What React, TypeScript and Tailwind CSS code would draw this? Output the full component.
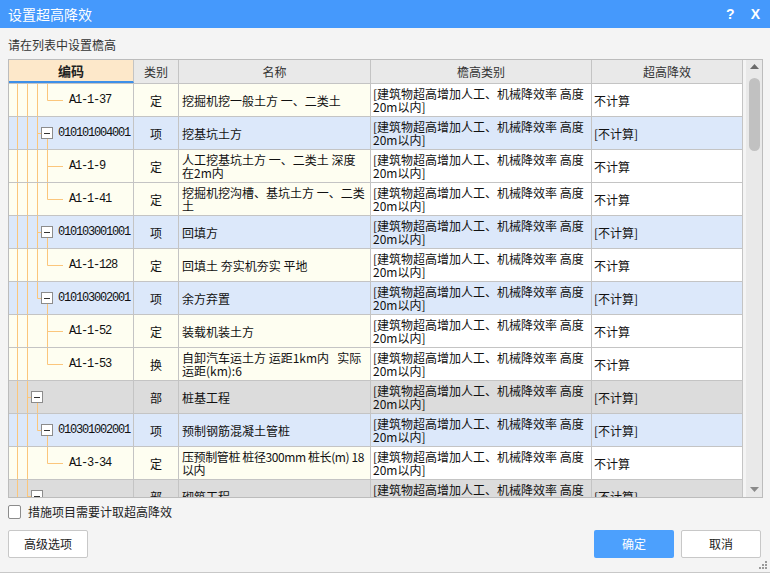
import React from 'react';

type Row = {
  kind: 'leaf' | 'xiang' | 'bu';
  code?: string;
  cat: string;
  name: string;
  eff: string;
  last?: boolean;
  l37?: boolean;
  tight?: boolean;
};

const EAVE = '[建筑物超高增加人工、机械降效率 高度\n20m以内]';

const ROWS: Row[] = [
  { kind: 'leaf', code: 'A1-1-37', cat: '定', name: '挖掘机挖一般土方 一、二类土', eff: '不计算', last: true, l37: true },
  { kind: 'xiang', code: '010101004001', cat: '项', name: '挖基坑土方', eff: '[不计算]' },
  { kind: 'leaf', code: 'A1-1-9', cat: '定', name: '人工挖基坑土方 一、二类土 深度\n在2m内', eff: '不计算', l37: true },
  { kind: 'leaf', code: 'A1-1-41', cat: '定', name: '挖掘机挖沟槽、基坑土方 一、二类\n土', eff: '不计算', last: true, l37: true },
  { kind: 'xiang', code: '010103001001', cat: '项', name: '回填方', eff: '[不计算]' },
  { kind: 'leaf', code: 'A1-1-128', cat: '定', name: '回填土 夯实机夯实 平地', eff: '不计算', last: true, l37: true },
  { kind: 'xiang', code: '010103002001', cat: '项', name: '余方弃置', eff: '[不计算]', last: true },
  { kind: 'leaf', code: 'A1-1-52', cat: '定', name: '装载机装土方', eff: '不计算' },
  { kind: 'leaf', code: 'A1-1-53', cat: '换', name: '自卸汽车运土方 运距1km内   实际\n运距(km):6', eff: '不计算', last: true },
  { kind: 'bu', cat: '部', name: '桩基工程', eff: '[不计算]' },
  { kind: 'xiang', code: '010301002001', cat: '项', name: '预制钢筋混凝土管桩', eff: '[不计算]', last: true },
  { kind: 'leaf', code: 'A1-3-34', cat: '定', name: '压预制管桩 桩径300mm 桩长(m) 18\n以内', eff: '不计算', last: true, tight: true },
  { kind: 'bu', cat: '部', name: '砌筑工程', eff: '[不计算]' },
];

const LINE = '#fbc67c';

function MinusBox({ x }: { x: number }) {
  return (
    <>
      <rect x={x + 0.5} y={10.5} width={11} height={11} fill="#fff" stroke="#8c8c8c" />
      <line x1={x + 3} y1={16.5} x2={x + 9} y2={16.5} stroke="#333" />
    </>
  );
}

// tree connectors for the 编码 column
function Tree({ row }: { row: Row }) {
  const w = row.kind === 'xiang' ? 49 : 60;
  return (
    <svg width={w} height={32} className="shrink-0">
      <line x1={8.5} y1={0} x2={8.5} y2={32} stroke={LINE} />
      <line x1={18.5} y1={0} x2={18.5} y2={32} stroke={LINE} />
      {row.kind === 'leaf' && (
        <>
          {row.l37 && <line x1={28.5} y1={0} x2={28.5} y2={32} stroke={LINE} />}
          <line x1={38.5} y1={0} x2={38.5} y2={row.last ? 16.5 : 32} stroke={LINE} />
          <line x1={38.5} y1={16.5} x2={54} y2={16.5} stroke={LINE} />
        </>
      )}
      {row.kind === 'xiang' && (
        <>
          <line x1={28.5} y1={0} x2={28.5} y2={row.last ? 16.5 : 32} stroke={LINE} />
          <line x1={28.5} y1={16.5} x2={32} y2={16.5} stroke={LINE} />
          <line x1={38.5} y1={22} x2={38.5} y2={32} stroke={LINE} />
          <MinusBox x={32} />
        </>
      )}
      {row.kind === 'bu' && (
        <>
          <line x1={18.5} y1={16.5} x2={22} y2={16.5} stroke={LINE} />
          <line x1={28.5} y1={22} x2={28.5} y2={32} stroke={LINE} />
          <MinusBox x={22} />
        </>
      )}
    </svg>
  );
}

function TableRow({ row }: { row: Row }) {
  const left =
    row.kind === 'leaf' ? 'bg-[#fefef1]' : row.kind === 'xiang' ? 'bg-[#dce8fa]' : 'bg-[#dcdcdc]';
  const right =
    row.kind === 'leaf' ? 'bg-white' : row.kind === 'xiang' ? 'bg-[#dce8fa]' : 'bg-[#dcdcdc]';
  return (
    <div className="flex h-[33px] shrink-0 border-b border-[#c4c4c4] text-[12px] leading-[13px] text-[#111]">
      <div className={`flex w-[125px] shrink-0 items-center border-r border-[#c4c4c4] ${left}`}>
        <Tree row={row} />
        {row.code && (
          <span className="font-['Liberation_Mono',monospace] text-[12px] tracking-[-1.2px]">{row.code}</span>
        )}
      </div>
      <div className={`flex w-[45px] shrink-0 items-center justify-center border-r border-[#c4c4c4] ${left}`}>
        {row.cat}
      </div>
      <div
        className={`flex w-[192px] shrink-0 items-center overflow-hidden whitespace-pre border-r border-[#c4c4c4] pl-[3px] ${left} ${
          row.tight ? 'tracking-[-0.4px]' : ''
        }`}
      >
        {row.name}
      </div>
      <div className={`flex w-[221px] shrink-0 items-center overflow-hidden whitespace-pre border-r border-[#c4c4c4] pl-[2px] ${right}`}>
        {EAVE}
      </div>
      <div className={`flex w-[151px] shrink-0 items-center border-r border-[#c4c4c4] pl-[2px] ${right}`}>
        {row.eff}
      </div>
    </div>
  );
}

function Header() {
  return (
    <div className="flex h-[24px] shrink-0 border-b border-[#c4c4c4] bg-[#e9e9e9] text-[12px] text-[#333]">
      <div className="flex w-[125px] shrink-0 items-center justify-center border-r border-[#c4c4c4] border-b-2 border-b-[#3d8fe8] bg-[#fde8ca] text-[13px] font-bold text-[#222]">
        编码
      </div>
      <div className="flex w-[45px] shrink-0 items-center justify-center border-r border-[#c4c4c4]">类别</div>
      <div className="flex w-[192px] shrink-0 items-center justify-center border-r border-[#c4c4c4]">名称</div>
      <div className="flex w-[221px] shrink-0 items-center justify-center border-r border-[#c4c4c4]">檐高类别</div>
      <div className="flex w-[151px] shrink-0 items-center justify-center border-r border-[#c4c4c4]">超高降效</div>
    </div>
  );
}

function ScrollBar() {
  return (
    <div className="flex w-[19px] shrink-0 bg-[#f4f4f4] pl-[3px]">
      <div className="flex w-[16px] flex-col items-center justify-between bg-[#e9e9e9] pb-[5px] pt-[4px]">
        <div className="flex flex-col items-center">
          <svg width={9} height={5}>
            <polygon points="0,5 4.5,0 9,5" fill="#6b6b6b" />
          </svg>
          <div className="mt-[9px] h-[73px] w-[11px] rounded-full bg-[#c1c1c1]" />
        </div>
        <svg width={9} height={5}>
          <polygon points="0,0 4.5,5 9,0" fill="#8a8a8a" />
        </svg>
      </div>
    </div>
  );
}

export default function App() {
  return (
    <div className="relative flex h-[573px] w-[770px] flex-col border-b border-[#c8c8c8] bg-[#f4f4f4] font-['Noto_Sans_CJK_SC',sans-serif]">
      {/* title bar */}
      <div className="flex h-[28px] shrink-0 items-center justify-between bg-[#4599fc] pl-[8px] pr-[10px] text-white">
        <span className="text-[14px]">设置超高降效</span>
        <div className="flex items-center gap-[16px] font-['Liberation_Sans',sans-serif] text-[14px] font-bold">
          <span>?</span>
          <span>X</span>
        </div>
      </div>

      <div className="pb-[7px] pl-[8px] pt-[10px] text-[12px] leading-[14px] text-[#333]">请在列表中设置檐高</div>

      {/* grid */}
      <div className="ml-[8px] flex h-[439px] w-[755px] border border-[#bcbcbc] bg-white">
        <div className="flex w-[734px] flex-col overflow-hidden">
          <Header />
          {ROWS.map((r, i) => (
            <TableRow key={i} row={r} />
          ))}
        </div>
        <ScrollBar />
      </div>

      <label className="ml-[8px] mt-[7px] flex h-[14px] items-center gap-[7px] text-[12px] text-[#222]">
        <span className="h-[14px] w-[13px] rounded-[2px] border border-[#8c8c8c] bg-white" />
        措施项目需要计取超高降效
      </label>

      <div className="mt-[11px] flex items-center justify-between px-[8px] text-[12px]">
        <button className="h-[28px] w-[80px] rounded-[2px] border border-[#c8c8c8] bg-white text-[#222]">高级选项</button>
        <div className="mr-[1px] flex gap-[7px]">
          <button className="h-[28px] w-[80px] rounded-[2px] bg-[#4ca0fd] text-white">确定</button>
          <button className="h-[28px] w-[80px] rounded-[2px] border border-[#c8c8c8] bg-white text-[#222]">取消</button>
        </div>
      </div>

      {/* resize grip */}
      <svg width={9} height={9} className="absolute bottom-[2px] right-[2px]">
        <rect x={6} y={0} width={2} height={2} fill="#9a9a9a" />
        <rect x={3} y={3} width={2} height={2} fill="#9a9a9a" />
        <rect x={6} y={3} width={2} height={2} fill="#9a9a9a" />
        <rect x={0} y={6} width={2} height={2} fill="#9a9a9a" />
        <rect x={3} y={6} width={2} height={2} fill="#9a9a9a" />
        <rect x={6} y={6} width={2} height={2} fill="#9a9a9a" />
      </svg>
    </div>
  );
}
